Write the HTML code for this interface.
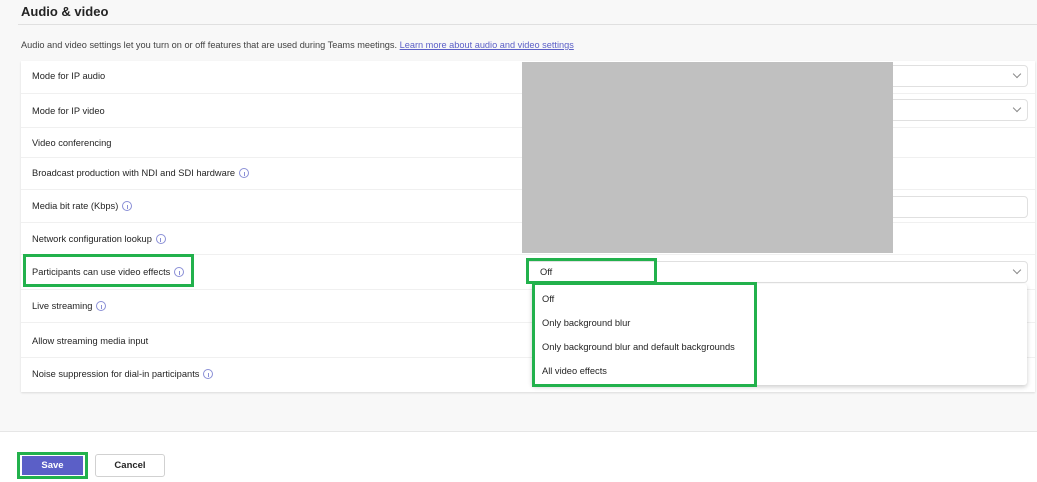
<!DOCTYPE html>
<html><head><style>
*{box-sizing:border-box;margin:0;padding:0}
body{width:1037px;height:482px;background:#f8f8f8;font-family:"Liberation Sans",sans-serif;color:#242424;position:relative;overflow:hidden;font-size:9.3px}
.a{position:absolute}
.row{position:absolute;left:21px;width:1014px;border-bottom:1px solid #f0f0f0;}
.lbl{position:absolute;left:32px;font-size:9.3px;color:#242424}
.info{display:inline-block;width:10px;height:10px;border:1px solid #8a8fd6;border-radius:50%;vertical-align:-2px;margin-left:4px;position:relative}
.info:after{content:"";position:absolute;left:3.5px;top:2.5px;width:1px;height:4px;background:#8a8fd6}
.dd{position:absolute;background:#fff;border:1px solid #e0e0e0;border-radius:4px}
.chev{position:absolute;right:7px;top:5px;width:6px;height:6px;border-right:1px solid #888;border-bottom:1px solid #888;transform:rotate(45deg)}
.g{position:absolute;border:3px solid #22b14c}
</style></head><body>
<div class="a" style="left:21px;top:4px;font-size:13px;font-weight:bold;color:#242424">Audio &amp; video</div>
<div class="a" style="left:18px;top:24px;width:1019px;height:1px;background:#e0e0e0"></div>
<div class="a" style="left:21px;top:40px;font-size:9.2px;color:#424242">Audio and video settings let you turn on or off features that are used during Teams meetings. <span style="color:#5b5fc7;text-decoration:underline">Learn more about audio and video settings</span></div>
<div class="a" style="left:21px;top:61px;width:1014px;height:331px;background:#fff;box-shadow:0 1px 2px rgba(0,0,0,.12)"></div>
<div class="row" style="top:61px;height:33px"></div>
<div class="row" style="top:94px;height:34px"></div>
<div class="row" style="top:128px;height:30px"></div>
<div class="row" style="top:158px;height:32px"></div>
<div class="row" style="top:190px;height:33px"></div>
<div class="row" style="top:223px;height:32px"></div>
<div class="row" style="top:255px;height:35px"></div>
<div class="row" style="top:290px;height:33px"></div>
<div class="row" style="top:323px;height:35px"></div>
<div class="lbl" style="top:71px">Mode for IP audio</div>
<div class="lbl" style="top:106px">Mode for IP video</div>
<div class="lbl" style="top:138px">Video conferencing</div>
<div class="lbl" style="top:168px">Broadcast production with NDI and SDI hardware<span class="info"></span></div>
<div class="lbl" style="top:201px">Media bit rate (Kbps)<span class="info"></span></div>
<div class="lbl" style="top:234px">Network configuration lookup<span class="info"></span></div>
<div class="lbl" style="top:267px">Participants can use video effects<span class="info"></span></div>
<div class="lbl" style="top:301px">Live streaming<span class="info"></span></div>
<div class="lbl" style="top:336px">Allow streaming media input</div>
<div class="lbl" style="top:369px">Noise suppression for dial-in participants<span class="info"></span></div>
<div class="dd" style="left:880px;top:65px;width:148px;height:22px"><div class="chev"></div></div>
<div class="dd" style="left:880px;top:99px;width:148px;height:22px"><div class="chev"></div></div>
<div class="dd" style="left:880px;top:196px;width:148px;height:22px"></div>
<div class="a" style="left:522px;top:62px;width:371px;height:191px;background:#c0c0c0"></div>
<div class="dd" style="left:526px;top:261px;width:502px;height:22px"><div class="chev"></div></div>
<div class="a" style="left:540px;top:267px">Off</div>
<div class="a" style="left:532px;top:284px;width:495px;height:101px;background:#fff;box-shadow:0 2px 5px rgba(0,0,0,.2);border-radius:3px"></div>
<div class="a" style="left:542px;top:294px">Off</div>
<div class="a" style="left:542px;top:318px">Only background blur</div>
<div class="a" style="left:542px;top:342px">Only background blur and default backgrounds</div>
<div class="a" style="left:542px;top:366px">All video effects</div>
<div class="g" style="left:23px;top:254px;width:171px;height:33px"></div>
<div class="g" style="left:526px;top:258px;width:131px;height:26px"></div>
<div class="g" style="left:532px;top:282px;width:225px;height:105px"></div>
<div class="a" style="left:0;top:431px;width:1037px;height:51px;background:#fff;border-top:1px solid #e6e6e6"></div>
<div class="g" style="left:17px;top:452px;width:71px;height:27px"></div>
<div class="a" style="left:22px;top:456px;width:61px;height:19px;background:#5b5fc7;color:#fff;font-weight:bold;text-align:center;line-height:20px;font-size:9.5px">Save</div>
<div class="a" style="left:95px;top:454px;width:70px;height:23px;background:#fff;border:1px solid #d1d1d1;border-radius:3px;font-weight:bold;text-align:center;line-height:22px;font-size:9.5px">Cancel</div>
</body></html>
